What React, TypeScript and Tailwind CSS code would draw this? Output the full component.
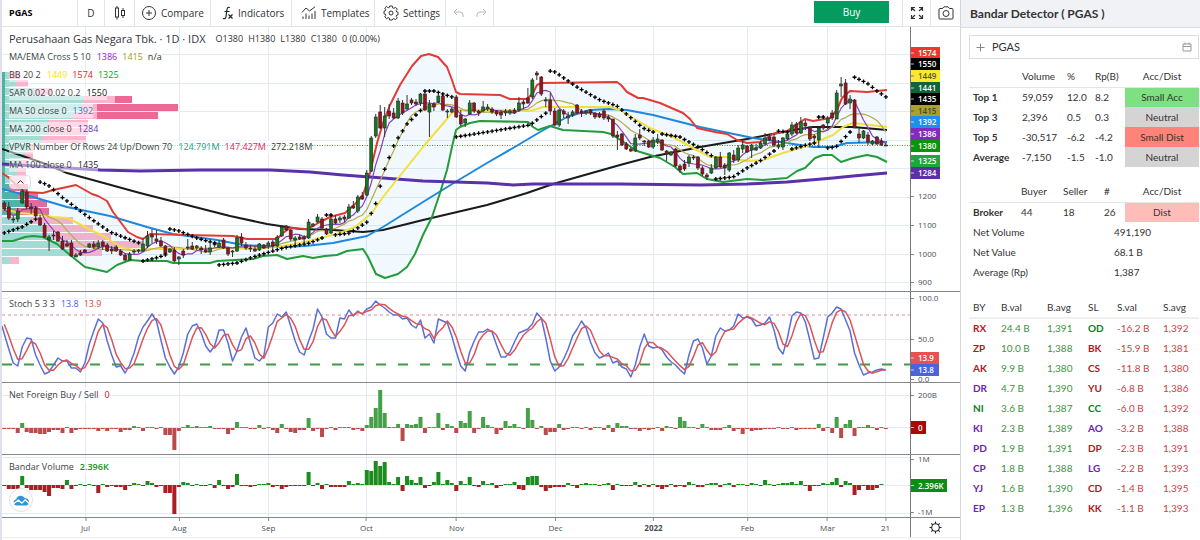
import { type FC, type ReactNode } from "react";

/* ============================================================
   DATA
============================================================ */

type Point = [number, number];

// one slot per trading day
const FIRST_X = 4.3;
const STEP = 4.475;
const barX = (i: number) => FIRST_X + i * STEP;

// g/r, high, body top, body bottom, low
const CANDLES = `
r 201 203 209 211|r 202 207 218 220|g 216 219 220 223|g 208 211 219 222|g 188 191 203 204|r 190 192 207 209
r 203 207 209 214|r 206 208 216 217|r 215 218 225 226|r 223 225 237 238|g 235 237 240 251|r 231 235 236 240
r 231 232 241 242|r 236 241 249 250|r 240 244 246 247|r 240 243 256 257|g 253 255 257 257|r 250 253 255 256
r 249 250 252 253|g 243 244 247 248|r 241 244 247 249|g 240 243 247 249|r 240 242 246 250|r 243 245 251 252
r 246 249 251 254|r 245 247 251 252|r 249 251 255 256|r 253 255 260 261|g 252 254 260 261|r 249 251 252 254
g 249 250 251 253|g 238 244 251 252|g 231 236 246 248|r 229 235 237 243|r 230 239 241 244|r 237 241 246 247
r 245 246 254 255|g 248 249 252 253|r 247 250 261 262|g 256 257 259 265|r 249 251 255 258|g 239 247 248 250
r 242 246 249 250|g 245 246 248 250|r 246 248 250 254|r 245 250 252 253|g 244 248 252 255|g 241 243 245 247
g 240 243 247 248|r 238 240 248 249|r 247 248 254 256|g 250 251 252 257|g 235 238 251 252|r 233 237 243 246
r 242 245 248 250|r 245 248 249 252|r 246 249 251 252|g 243 244 250 251|r 244 245 248 249|g 241 243 246 249
r 240 242 246 249|g 235 237 246 247|g 225 227 236 237|r 225 226 230 231|r 229 230 239 241|g 236 238 240 244
r 235 237 239 240|r 235 237 239 242|g 219 222 238 239|g 223 224 226 227|g 214 217 222 223|r 217 219 228 229
r 228 229 234 235|g 217 219 233 234|r 215 219 223 224|g 216 218 220 223|r 215 217 219 222|g 204 207 218 219
r 201 206 208 209|g 195 197 211 213|r 192 196 199 200|g 170 173 195 196|g 136 138 171 172|g 114 117 136 138
r 105 112 128 129|g 107 116 128 137|r 104 111 116 119|r 108 113 118 119|g 98 101 118 119|r 100 103 113 115
g 95 104 109 110|r 98 100 103 105|r 99 102 104 106|g 93 94 103 106|r 92 94 110 111|g 100 104 112 137
r 102 104 107 111|g 93 96 102 103|r 94 96 110 111|r 109 111 112 118|g 107 109 112 113|r 95 97 117 118
r 110 115 124 126|g 118 119 123 127|g 100 103 114 115|r 102 103 111 113|r 110 111 113 116|g 101 107 111 112
g 104 107 109 111|r 107 109 112 114|r 110 111 114 116|r 110 112 115 119|g 109 111 113 116|g 109 111 113 115
r 108 110 113 114|g 97 103 110 112|r 100 102 104 109|r 88 98 103 104|g 78 80 97 99|r 71 73 75 80
r 76 77 94 96|g 97 100 101 107|r 93 100 111 115|r 108 111 125 126|g 109 110 125 127|r 109 111 114 118
g 112 116 118 124|g 110 112 115 117|r 104 105 113 114|r 109 111 113 117|g 110 111 113 115|r 109 110 113 115
r 112 113 117 119|r 112 114 117 118|r 109 111 118 120|r 115 117 119 122|r 119 119 136 138|r 131 135 137 150
r 133 134 145 146|r 142 144 149 150|r 147 149 151 152|g 134 138 151 152|r 129 135 138 140|g 140 141 142 146
r 140 141 147 148|g 137 140 147 149|g 134 139 142 144|r 139 140 150 151|r 150 151 154 161|g 151 152 155 156
r 148 149 166 167|r 164 166 170 173|r 160 164 169 171|g 155 157 163 167|r 155 157 158 160|r 156 157 168 170
r 166 168 174 176|r 173 175 177 180|g 164 168 173 174|g 156 157 168 169|r 152 157 167 168|r 163 165 168 175
g 152 153 170 172|r 150 155 160 163|g 145 148 160 162|g 141 145 149 153|r 145 146 152 153|g 144 145 150 158
g 144 148 150 151|g 141 143 148 149|g 133 138 144 145|r 135 137 140 141|r 134 137 145 147|g 140 145 147 149
g 137 138 147 150|g 133 134 139 140|g 122 125 134 136|r 122 124 133 134|g 117 122 133 134|r 120 123 126 130
r 126 127 139 141|r 134 136 138 141|g 127 128 140 148|r 124 125 128 130|g 116 118 123 129|r 110 113 118 120
g 90 93 119 119|g 77 84 86 97|r 79 83 104 105|g 95 99 103 109|r 99 100 128 128|r 128 134 138 143
g 130 131 138 139|r 132 135 142 145|g 140 141 144 145|r 136 137 144 145|r 138 141 145 146|r 143 145 146 146`
  .trim()
  .split(/[|\n]/)
  .map((row) => {
    const [side, ...n] = row.split(" ");
    const [high, top, bottom, low] = n.map(Number);
    return { up: side === "g", high, top, bottom, low };
  });

const BB_UPPER: Point[] = [
  [2, 173], [8, 177], [13, 182], [25, 192], [43, 193], [53, 190], [67, 187], [76, 185], [92, 194], [98, 196],
  [107, 201], [113, 212], [128, 232], [137, 237], [143, 239], [150, 234], [187, 235], [233, 236], [247, 239],
  [277, 239], [283, 233], [290, 228], [307, 229], [313, 226], [320, 222], [330, 217], [345, 213], [355, 204],
  [363, 195], [370, 173], [377, 143], [383, 123], [390, 105], [400, 85], [412, 66], [421, 56], [429, 54],
  [438, 57], [447, 67], [452, 80], [456, 92], [460, 94], [500, 95], [510, 99], [527, 99], [533, 93], [537, 85],
  [542, 83], [617, 82], [621, 85], [627, 92], [638, 98], [643, 98], [660, 103], [683, 113], [690, 119],
  [697, 128], [715, 132], [727, 134], [737, 140], [747, 143], [760, 142], [773, 134], [787, 131], [805, 119],
  [813, 121], [830, 118], [837, 110], [842, 98], [850, 91], [867, 92], [887, 90],
];

const BB_LOWER: Point[] = [
  [2, 241], [13, 241], [25, 237], [33, 236], [43, 237], [57, 244], [70, 255], [85, 267], [107, 272], [117, 265],
  [130, 260], [143, 261], [167, 261], [173, 263], [210, 263], [217, 261], [253, 259], [263, 256], [277, 255],
  [287, 259], [303, 256], [313, 258], [325, 256], [337, 255], [347, 251], [363, 249], [368, 257], [376, 274],
  [385, 278], [398, 274], [407, 267], [415, 254], [423, 235], [432, 217], [440, 193], [447, 170], [452, 147],
  [456, 130], [460, 127], [470, 123], [480, 121], [528, 122], [533, 127], [538, 130], [550, 126], [563, 130],
  [583, 131], [603, 132], [611, 134], [622, 141], [637, 151], [660, 158], [675, 167], [683, 174], [697, 173],
  [707, 179], [723, 182], [747, 179], [763, 180], [787, 178], [797, 171], [805, 168], [815, 158], [823, 155],
  [832, 155], [841, 162], [853, 158], [867, 155], [877, 157], [887, 162],
];

const BB_BASIS: Point[] = [
  [2, 209], [20, 213], [33, 214], [53, 217], [68, 218], [87, 228], [107, 238], [120, 247], [133, 250],
  [153, 249], [183, 249], [227, 248], [253, 249], [283, 246], [305, 242], [340, 233], [355, 227], [372, 213],
  [383, 197], [423, 147], [452, 113], [458, 110], [487, 110], [530, 111], [543, 107], [610, 107], [620, 110],
  [633, 118], [650, 128], [673, 137], [693, 148], [710, 157], [727, 157], [747, 161], [763, 160], [783, 153],
  [807, 146], [833, 135], [843, 127], [853, 123], [887, 127],
];

const MA50: Point[] = [
  [2, 189], [33, 197], [67, 207], [110, 216], [147, 227], [173, 234], [217, 240], [243, 245], [283, 247],
  [305, 246], [333, 243], [367, 236], [383, 227], [423, 202], [457, 181], [487, 163], [513, 148], [540, 132],
  [567, 117], [590, 110], [610, 109], [627, 110], [653, 115], [700, 127], [753, 138], [787, 143], [813, 147],
  [833, 147], [847, 143], [887, 142],
];

const MA100: Point[] = [
  [2, 149], [43, 163], [67, 173], [100, 182], [140, 193], [187, 205], [230, 216], [267, 224], [300, 229],
  [333, 230], [363, 232], [383, 230], [423, 220], [487, 205], [527, 193], [553, 184], [620, 165], [650, 157],
  [700, 147], [747, 139], [793, 130], [813, 127], [853, 127], [887, 130],
];

const MA200: Point[] = [
  [2, 164], [50, 167], [100, 170], [140, 171], [200, 170], [270, 170], [310, 172], [343, 175], [423, 181],
  [487, 183], [513, 185], [533, 184], [620, 184], [700, 185], [747, 184], [787, 182], [833, 178], [853, 176],
  [887, 173],
];

const SAR: Point[][] = [
  [[4, 233], [22, 227], [36, 219]],
  [[40, 182], [48, 185], [63, 198], [87, 216], [110, 232], [139, 243]],
  [[143, 261], [156, 258], [168, 254]],
  [[170, 229], [179, 231], [197, 238], [214, 243]],
  [[218, 265], [237, 263], [253, 257], [283, 248], [310, 243], [322, 238]],
  [[326, 215], [331, 215]],
  [[335, 235], [350, 233], [367, 222], [371, 214], [376, 203], [380, 187], [384, 171], [389, 158], [393, 147], [398, 138], [407, 124], [421, 110]],
  [[425, 91], [434, 91], [452, 97]],
  [[456, 137], [530, 125], [546, 113]],
  [[550, 71], [555, 72], [577, 87], [600, 100], [617, 106], [630, 117], [643, 128], [653, 132]],
  [[662, 134], [680, 137], [700, 148], [712, 156]],
  [[716, 179], [733, 177], [747, 168], [760, 161], [774, 151]],
  [[778, 131], [787, 132]],
  [[792, 149], [814, 143]],
  [[818, 117], [824, 117]],
  [[827, 148], [836, 147], [850, 132]],
  [[854, 77], [867, 83], [877, 91], [886, 97]],
];

const STOCH_K = [
  334, 349, 363, 366, 347, 338, 339, 355, 365, 374, 372, 365, 358, 361, 361, 368, 368, 372, 363, 344, 331, 319,
  323, 341, 355, 367, 366, 373, 365, 353, 337, 327, 321, 314, 321, 340, 358, 367, 374, 367, 353, 334, 326, 324,
  333, 346, 352, 346, 330, 330, 343, 361, 351, 337, 328, 343, 358, 361, 356, 327, 323, 314, 317, 312, 326, 341,
  352, 355, 341, 329, 309, 317, 334, 338, 338, 318, 319, 310, 316, 311, 314, 309, 307, 301, 305, 308, 312, 315,
  315, 319, 318, 325, 328, 320, 338, 334, 343, 319, 321, 323, 336, 352, 366, 371, 352, 341, 332, 332, 329, 332,
  345, 357, 357, 352, 342, 333, 331, 329, 324, 313, 318, 338, 361, 371, 367, 359, 349, 336, 329, 321, 328, 342,
  353, 358, 356, 353, 363, 361, 367, 369, 377, 365, 347, 334, 346, 348, 347, 350, 357, 362, 365, 370, 374, 355,
  341, 339, 348, 364, 356, 336, 328, 331, 330, 326, 314, 318, 317, 319, 326, 325, 323, 317, 330, 348, 354, 338,
  316, 312, 313, 322, 340, 359, 358, 338, 317, 313, 307, 309, 320, 331, 353, 365, 375, 373, 372, 370, 369, 370,
];

const FOREIGN = [
  -1, -1, -1, -5, 5, -4, -5, -5, -6, -6, -4, -2, -2, -5, 1, -5, -2, -1, -1, -1, -1, -3, -1, -3, -1, -1, -4, -2,
  -2, 2, 1, -3, 1, 1, -1, 1, -7, -7, -22, -3, 1, 3, 1, 2, 1, 1, 2, -1, -1, -1, -6, -2, 6, 1, 1, -1, -1, 3, -1,
  1, -2, -5, 4, -1, -4, -5, -2, -2, 10, -3, -1, -9, -1, 1, -2, 1, 1, 1, -2, -1, -3, 3, 11, 20, 38, 15, 1, 1, 4,
  -13, 4, 3, 4, 11, -5, 1, 1, 15, -2, 4, 2, -5, 7, 5, 17, -5, -1, 11, 3, 1, -6, -2, 7, 2, 4, 1, -1, 20, 8, -1,
  2, -7, -4, -4, 4, -2, -1, 1, 1, -1, 1, -2, 1, 1, -2, 3, -4, 5, 2, 2, -1, -1, -3, -1, -2, -1, 1, -3, 2, 1, -1,
  11, 7, 1, 1, -1, 4, 1, -2, -2, -2, 1, 3, -3, -1, -6, -1, -3, -2, -2, -1, -1, -1, 1, -1, -1, 1, -2, -1, -1, -1,
  -1, 4, -3, 1, -5, 11, -10, 4, 8, -8, 1, 1, 3, 1, -2, 1, -1,
];

const BANDAR = [
  -1, -4, -4, -4, 9, -3, -5, -5, -5, -7, -11, -3, -3, -4, 5, -4, -1, 1, -1, 1, -1, -8, 1, -2, -1, -2, -2, -5, -1,
  2, 1, -1, 4, 2, -2, -1, -8, -8, -29, -2, 3, 2, -1, 1, -1, -1, 1, -3, 5, -1, -4, -2, 11, -1, -1, -2, -1, 1, 1,
  2, -2, -1, -4, -2, -1, -1, -1, -1, 13, -1, 2, -4, 1, -2, -2, -2, -2, 4, 1, 2, 1, 15, 14, 24, 19, 23, 3, 1, 8,
  -6, 9, 5, 2, 8, -3, -1, 3, 13, 1, 5, 2, -6, 4, 1, 8, -1, -2, 4, 1, 2, -3, -1, 1, 1, 3, -4, -5, 8, 9, 9, -2,
  -6, -3, -2, -2, -2, 2, -1, -3, 1, 2, 1, 1, -1, 1, 2, -5, 1, -1, -1, -1, 3, -2, 1, -2, 1, -2, -4, -2, 1, -2,
  -1, -2, 3, 1, -2, -2, 1, 2, 2, -2, 1, 2, -2, 1, 1, -1, 2, 1, -1, 5, 1, -1, 1, 2, 2, 3, 1, 4, -1, -6, -1, -1,
  2, 1, 3, 7, -2, 4, 2, -10, -5, -1, -5, -5, -3, 1,
];

// volume profile rows: y, end of up volume, end of down volume, inside value area
const PROFILE: [number, number, number, boolean][] = [
  [72, 9, 20, false], [80, 16, 28, false], [88, 35, 52, false], [96, 84, 115, false], [104, 82, 97, false],
  [112, 73, 97, false], [120, 48, 88, false], [128, 48, 88, false], [136, 42, 86, false], [144, 30, 33, false],
  [152, 24, 33, false], [160, 20, 27, false], [168, 17, 26, false], [176, 9, 26, false], [184, 9, 28, true],
  [192, 18, 38, true], [200, 25, 47, true], [208, 15, 49, true], [217, 30, 73, false], [225, 42, 93, false],
  [233, 52, 111, false], [241, 60, 143, false], [249, 72, 102, false], [257, 10, 19, false],
];

const GRID_X = [85, 179, 268, 366, 456, 555, 653, 747, 827, 885];
const GRID_Y = [54, 83, 111, 140, 168, 197, 225, 254, 282];

const MONTHS = [
  { x: 85, label: "Jul" },
  { x: 179, label: "Aug" },
  { x: 268, label: "Sep" },
  { x: 366, label: "Oct" },
  { x: 456, label: "Nov" },
  { x: 555, label: "Dec" },
  { x: 653, label: "2022", bold: true },
  { x: 747, label: "Feb" },
  { x: 827, label: "Mar" },
  { x: 885, label: "21" },
];

const PRICE_TAGS = [
  { y: 47, label: "1574", fill: "#f0362c" },
  { y: 58, label: "1550", fill: "#000000" },
  { y: 70, label: "1449", fill: "#fce92b", text: "#555533" },
  { y: 82, label: "1441", fill: "#14613a" },
  { y: 93, label: "1435", fill: "#000000" },
  { y: 105, label: "1415", fill: "#aaa12c", text: "#454530" },
  { y: 116, label: "1392", fill: "#1c8ff0" },
  { y: 128, label: "1386", fill: "#8528bd" },
  { y: 140, label: "1380", fill: "#0b940b" },
  { y: 155, label: "1325", fill: "#1fa63a" },
  { y: 167, label: "1284", fill: "#5c2fa5" },
];

interface LegendItem {
  name: string;
  values: { text: string; tone: string }[];
}

const LEGEND: LegendItem[] = [
  {
    name: "MA/EMA Cross 5 10",
    values: [
      { text: "1386", tone: "text-[#8e24c8]" },
      { text: "1415", tone: "text-[#a59a1c]" },
      { text: "n/a", tone: "text-[#333333]" },
    ],
  },
  {
    name: "BB 20 2",
    values: [
      { text: "1449", tone: "text-[#f5e50a]" },
      { text: "1574", tone: "text-[#e0261c]" },
      { text: "1325", tone: "text-[#129a2c]" },
    ],
  },
  { name: "SAR 0.02 0.02 0.2", values: [{ text: "1550", tone: "text-[#111111]" }] },
  { name: "MA 50 close 0", values: [{ text: "1392", tone: "text-[#1c7fe0]" }] },
  { name: "MA 200 close 0", values: [{ text: "1284", tone: "text-[#5e35b1]" }] },
  {
    name: "VPVR Number Of Rows 24 Up/Down 70",
    values: [
      { text: "124.791M", tone: "text-[#1f9e8c]" },
      { text: "147.427M", tone: "text-[#e02868]" },
      { text: "272.218M", tone: "text-[#333333]" },
    ],
  },
  { name: "MA 100 close 0", values: [{ text: "1435", tone: "text-[#222222]" }] },
];

const TOP_ROWS = [
  { name: "Top 1", volume: "59,059", pct: "12.0", rp: "8.2", status: "Small Acc", tone: "bg-[#7ee081]" },
  { name: "Top 3", volume: "2,396", pct: "0.5", rp: "0.3", status: "Neutral", tone: "bg-[#d4d4d4]" },
  { name: "Top 5", volume: "-30,517", pct: "-6.2", rp: "-4.2", status: "Small Dist", tone: "bg-[#ff8378]" },
  { name: "Average", volume: "-7,150", pct: "-1.5", rp: "-1.0", status: "Neutral", tone: "bg-[#d4d4d4]" },
];

const NET_ROWS = [
  { name: "Net Volume", value: "491,190" },
  { name: "Net Value", value: "68.1 B" },
  { name: "Average (Rp)", value: "1,387" },
];

const RED = "text-[#b3161b]";
const GREEN = "text-[#0b7d1c]";
const PURPLE = "text-[#6a22b0]";

const BROKERS = [
  { by: "RX", byTone: RED, bval: "24.4 B", bavg: "1,391", sl: "OD", slTone: GREEN, sval: "-16.2 B", savg: "1,392" },
  { by: "ZP", byTone: RED, bval: "10.0 B", bavg: "1,388", sl: "BK", slTone: RED, sval: "-15.9 B", savg: "1,381" },
  { by: "AK", byTone: RED, bval: "9.9 B", bavg: "1,380", sl: "CS", slTone: RED, sval: "-11.8 B", savg: "1,380" },
  { by: "DR", byTone: PURPLE, bval: "4.7 B", bavg: "1,390", sl: "YU", slTone: RED, sval: "-6.8 B", savg: "1,386" },
  { by: "NI", byTone: GREEN, bval: "3.6 B", bavg: "1,387", sl: "CC", slTone: GREEN, sval: "-6.0 B", savg: "1,392" },
  { by: "KI", byTone: PURPLE, bval: "2.3 B", bavg: "1,389", sl: "AO", slTone: PURPLE, sval: "-3.2 B", savg: "1,388" },
  { by: "PD", byTone: PURPLE, bval: "1.9 B", bavg: "1,391", sl: "DP", slTone: RED, sval: "-2.3 B", savg: "1,391" },
  { by: "CP", byTone: PURPLE, bval: "1.8 B", bavg: "1,388", sl: "LG", slTone: PURPLE, sval: "-2.2 B", savg: "1,393" },
  { by: "YJ", byTone: PURPLE, bval: "1.6 B", bavg: "1,390", sl: "CD", slTone: RED, sval: "-1.4 B", savg: "1,395" },
  { by: "EP", byTone: PURPLE, bval: "1.3 B", bavg: "1,396", sl: "KK", slTone: RED, sval: "-1.1 B", savg: "1,393" },
];

/* ============================================================
   HELPERS
============================================================ */

const toPoints = (pts: Point[]) => pts.map((p) => p.join(",")).join(" ");

// `before` holds the values of the days left of the first bar
const average = (values: number[], span: number, before: number[] = []): Point[] => {
  const all = [...before, ...values];
  return values.map((_, i) => {
    const end = i + before.length + 1;
    const part = all.slice(Math.max(0, end - span), end);
    return [barX(i), part.reduce((a, b) => a + b, 0) / part.length];
  });
};

// height of a polyline at a given x
const heightAt = (line: Point[], x: number) => {
  const k = line.findIndex((p) => p[0] >= x);
  if (k <= 0) return line[k === 0 ? 0 : line.length - 1][1];
  const [x0, y0] = line[k - 1];
  const [x1, y1] = line[k];
  return y0 + ((y1 - y0) * (x - x0)) / (x1 - x0);
};

const closes = CANDLES.map((c) => (c.up ? c.top : c.bottom));

const sarDots = SAR.flatMap((line) =>
  CANDLES.map((_, i) => barX(i))
    .filter((x) => x >= line[0][0] - 1.5 && x <= line[line.length - 1][0] + 1.5)
    .map((x): Point => [x, heightAt(line, x)])
);

/* ============================================================
   ICONS
============================================================ */

const CandlesIcon = () => (
  <svg width="12" height="16" viewBox="0 0 12 16" fill="none" stroke="#333" strokeWidth="1">
    <path d="M3 1v2M3 12v2.5M9 3v2.500M9 10.500V13" />
    <rect x="1.500" y="3" width="3" height="9" />
    <rect x="7.500" y="5.500" width="3" height="5" />
  </svg>
);

const CompareIcon = () => (
  <svg width="16" height="16" viewBox="0 0 16 16" fill="none" stroke="#333" strokeWidth="1">
    <circle cx="8" cy="8" r="6.500" />
    <path d="M8 5v6M5 8h6" />
  </svg>
);

const FxIcon = () => (
  <svg width="12" height="14" viewBox="0 0 12 14" fill="none" stroke="#222" strokeWidth="1.200">
    <path d="M8 1.500C6.200 .8 5.300 1.600 5 3.500L4 10.500C3.700 12.400 2.800 13 1 12.500M2.500 5.500H7.500" />
    <path d="M6.500 8.500l4 4M10.500 8.500l-4 4" />
  </svg>
);

const TemplatesIcon = () => (
  <svg width="16" height="14" viewBox="0 0 16 14" fill="none" stroke="#333" strokeWidth="1">
    <path d="M1 6.500L5 2l3.500 3L14 .8" />
    <path d="M2 13v-2.500M5 13V7.500M8 13V9.500M11 13V7.500M14 13V5" />
  </svg>
);

const GearIcon = () => (
  <svg width="16" height="16" viewBox="0 0 16 16" fill="none" stroke="#333" strokeWidth="1" strokeLinejoin="round">
    <path d="M6.700 1h2.600l.4 1.900 1.200.5 1.600-1.100 1.800 1.800-1.100 1.600.5 1.200 1.300.3v2.600l-1.300.3-.5 1.200 1.100 1.600-1.800 1.800-1.600-1.100-1.200.5L9.300 15H6.700l-.4-1.900-1.200-.5-1.600 1.100-1.800-1.800 1.100-1.600-.5-1.200L1 8.800V6.200l1.300-.3.500-1.200L1.700 3.100l1.800-1.800 1.600 1.600 1.200-.5z" />
    <circle cx="8" cy="8" r="2" />
  </svg>
);

const UndoIcon: FC<{ flip?: boolean }> = ({ flip }) => (
  <svg width="11" height="10" viewBox="0 0 11 10" fill="none" stroke="#b8bac0" strokeWidth="1">
    <path d={flip ? "M1 9V7Q1 4 4 4h6M7 1l3 3-3 3" : "M10 9V7Q10 4 7 4H1M4 1L1 4l3 3"} />
  </svg>
);

const FullscreenIcon = () => (
  <svg width="14" height="14" viewBox="0 0 14 14" fill="none" stroke="#333" strokeWidth="1.200">
    <path d="M1.500 5V1.500H5M1.500 1.500l3.500 3.500M9 1.500h3.500V5M12.500 1.500L9 5M1.500 9v3.500H5M1.500 12.500L5 9M12.500 9v3.500H9M12.500 12.500L9 9" />
  </svg>
);

const CameraIcon = () => (
  <svg width="16" height="14" viewBox="0 0 16 14" fill="none" stroke="#333" strokeWidth="1">
    <path d="M1 3.500q0-1 1-1h2.500L6 .8h4l1.500 1.700H14q1 0 1 1V12q0 1-1 1H2q-1 0-1-1z" />
    <circle cx="8" cy="7.500" r="3" />
  </svg>
);

const SunIcon = () => (
  <svg width="13" height="13" viewBox="0 0 13 13" fill="none" stroke="#222" strokeWidth="1.100">
    <circle cx="6.500" cy="6.500" r="3.800" />
    <path d="M6.500 .5v2.200M6.500 10.300v2.200M.5 6.500h2.200M10.300 6.500h2.200M2.300 2.300l1.500 1.500M9.200 9.200l1.500 1.500M2.300 10.700l1.500-1.500M9.200 3.800l1.500-1.500" />
  </svg>
);

const CloudLogo = () => (
  <svg width="17" height="11" viewBox="0 0 17 11">
    <path d="M3.500 10.500a3.200 3.200 0 0 1-.3-6.300A4.800 4.800 0 0 1 12 3.300a3.700 3.700 0 0 1 1.500 7.200z" fill="#2f96d8" />
    <path d="M.5 8.800l4.800-3.600 3.600 3 3.300-3.400 4 3.600" fill="none" stroke="#fff" strokeWidth="1.300" />
  </svg>
);

/* ============================================================
   TOOLBAR
============================================================ */

interface ToolButtonProps {
  className: string;
  label?: string;
  children: ReactNode;
}

const ToolButton: FC<ToolButtonProps> = ({ className, label, children }) => (
  <button
    type="button"
    aria-label={label}
    className={`flex h-full shrink-0 items-center border-[#e0e3eb] ${className}`}
  >
    {children}
  </button>
);

const Toolbar = () => (
  <header className="flex h-[27px] items-center border-b border-[#e0e3eb] text-[10px] text-[#333]">
    <ToolButton className="w-[76px] border-r pl-[7px] text-[9px] font-bold text-black">PGAS</ToolButton>
    <ToolButton className="w-[27px] justify-center border-r">D</ToolButton>
    <ToolButton className="w-[30px] justify-center border-r" label="Candles">
      <CandlesIcon />
    </ToolButton>
    <ToolButton className="w-[76px] gap-1 border-r pl-[6px]">
      <CompareIcon />
      Compare
    </ToolButton>
    <ToolButton className="w-[81px] gap-1 border-r pl-[11px]">
      <FxIcon />
      Indicators
    </ToolButton>
    <ToolButton className="w-[83px] gap-1 border-r pl-[9px]">
      <TemplatesIcon />
      Templates
    </ToolButton>
    <ToolButton className="w-[71px] gap-1 border-r pl-[8px]">
      <GearIcon />
      Settings
    </ToolButton>
    <ToolButton className="w-6 justify-center" label="Undo">
      <UndoIcon />
    </ToolButton>
    <ToolButton className="w-6 justify-center border-r" label="Redo">
      <UndoIcon flip />
    </ToolButton>
    <button type="button" className="mr-[13px] mb-[2px] ml-auto h-[22px] w-[75px] bg-[#049b61] text-white">
      Buy
    </button>
    <ToolButton className="w-[29px] justify-center border-x" label="Fullscreen">
      <FullscreenIcon />
    </ToolButton>
    <ToolButton className="w-[29px] justify-center" label="Snapshot">
      <CameraIcon />
    </ToolButton>
  </header>
);

/* ============================================================
   CHART PANES
============================================================ */

interface PaneProps {
  height: string;
  top: number;
  span: number;
  rows: number[];
  legend: ReactNode;
  axis: ReactNode;
  children: ReactNode;
}

const Pane: FC<PaneProps> = ({ height, top, span, rows, legend, axis, children }) => (
  <section className={`relative flex border-b border-[#85878c] ${height}`}>
    <svg className="h-full min-w-0 flex-1" viewBox={`2 ${top} 908 ${span}`} preserveAspectRatio="none">
      <g stroke="#e1ecf2">
        {GRID_X.map((x) => (
          <line key={x} x1={x + 0.5} x2={x + 0.5} y1={top} y2={top + span} />
        ))}
        {rows.map((y) => (
          <line key={y} x1="2" x2="910" y1={y + 0.5} y2={y + 0.5} />
        ))}
      </g>
      {children}
    </svg>
    <svg
      className="h-full w-[50px] shrink-0 border-l border-[#75777c] text-[8px]"
      viewBox={`911 ${top} 49 ${span}`}
      preserveAspectRatio="xMinYMin slice"
    >
      {axis}
    </svg>
    <div className="absolute top-[3px] left-[7px]">{legend}</div>
  </section>
);

const AxisLabel: FC<{ y: number; children: ReactNode }> = ({ y, children }) => (
  <g>
    <path d={`M911 ${y + 0.5}h3`} stroke="#888" />
    <text x="918" y={y + 3} fill="#4a4d56">
      {children}
    </text>
  </g>
);

interface AxisTagProps {
  y: number;
  width: number;
  height?: number;
  fill: string;
  text?: string;
  children: ReactNode;
}

const AxisTag: FC<AxisTagProps> = ({ y, width, height = 12, fill, text = "#fff", children }) => (
  <g>
    <rect x="911" y={y} width={width} height={height} fill={fill} />
    <path d={`M911 ${y + height / 2}h3`} stroke={text} strokeOpacity=".7" />
    <text x="918" y={y + height / 2 + 3} fill={text} fontWeight="600">
      {children}
    </text>
  </g>
);

const LegendRow: FC<LegendItem> = ({ name, values }) => (
  <div className="flex h-[18px] items-center">
    <div className="flex gap-[5px] bg-white/50 text-[9px] leading-[14px] whitespace-nowrap">
      <span className="pr-px text-[#3c3f47]">{name}</span>
      {values.map((v) => (
        <span key={v.text} className={v.tone}>
          {v.text}
        </span>
      ))}
    </div>
  </div>
);

const PriceLegend = () => (
  <>
    <div className="flex h-[18px] items-center gap-[10px] whitespace-nowrap">
      <h1 className="text-[11px] text-[#33363d]">Perusahaan Gas Negara Tbk. · 1D · IDX</h1>
      <p className="flex gap-[5px] text-[9px] text-[#333]">
        <span>O1380</span>
        <span>H1380</span>
        <span>L1380</span>
        <span>C1380</span>
        <span>0 (0.00%)</span>
      </p>
    </div>
    {LEGEND.map((item) => (
      <LegendRow key={item.name} {...item} />
    ))}
    <button
      type="button"
      aria-label="Collapse legend"
      className="mt-px flex h-[14px] w-[22px] items-center justify-center rounded-sm border border-[#dddddd] bg-white/70"
    >
      <svg width="7" height="4" viewBox="0 0 7 4" fill="none" stroke="#333">
        <path d="M.5 3.500l3-3 3 3" />
      </svg>
    </button>
  </>
);

const PricePane = () => (
  <Pane
    height="h-[265px]"
    top={27}
    span={264}
    rows={GRID_Y}
    legend={<PriceLegend />}
    axis={
      <>
        {PRICE_TAGS.map((t) => (
          <AxisTag key={t.label} y={t.y} width={29} fill={t.fill} text={t.text}>
            {t.label}
          </AxisTag>
        ))}
        <AxisLabel y={196}>1200</AxisLabel>
        <AxisLabel y={225}>1100</AxisLabel>
        <AxisLabel y={254}>1000</AxisLabel>
        <AxisLabel y={282}>900</AxisLabel>
      </>
    }
  >
    {/* volume profile */}
    {PROFILE.map(([y, up, down, inside]) => (
      <g key={y}>
        <rect x="2" y={y} width={up - 2} height="7" fill={inside ? "#52b5a6" : "#a3dcd5"} />
        <rect x={up} y={y} width={down - up} height="7" fill={inside ? "#f06a9b" : "#fab4cd"} />
      </g>
    ))}
    <rect x="2" y="72" width="3" height="120" fill="#4fb3a3" />
    <rect x="115" y="96" width="17" height="7" fill="#f06695" />
    <rect x="97" y="104" width="81" height="7" fill="#f06695" />
    <rect x="97" y="112" width="61" height="7" fill="#f06695" />

    {/* Bollinger band */}
    <polygon points={toPoints([...BB_UPPER, ...[...BB_LOWER].reverse()])} fill="#2196f3" fillOpacity=".06" />
    <line x1="2" x2="910" y1="145.500" y2="145.500" stroke="#2e9e3a" strokeDasharray="1 1.500" />

    <g fill="none" strokeLinejoin="round">
      <polyline points={toPoints(MA100)} stroke="#1a1a1a" strokeWidth="2" />
      <polyline points={toPoints(MA50)} stroke="#1e88dc" strokeWidth="2" />
      <polyline points={toPoints(BB_UPPER)} stroke="#e03c36" strokeWidth="2" />
      <polyline points={toPoints(BB_LOWER)} stroke="#239c3c" strokeWidth="2" />
      <polyline points={toPoints(MA200)} stroke="#5a31ab" strokeWidth="3" />
      <polyline points={toPoints(BB_BASIS)} stroke="#f2e03c" strokeWidth="2" />
      <polyline points={toPoints(average(closes, 10))} stroke="#b3aa48" strokeWidth="1.200" />
      <polyline points={toPoints(average(closes, 5))} stroke="#8f3fc0" strokeWidth="1.200" />
    </g>

    {/* candles */}
    {CANDLES.map((c, i) => (
      <g key={i}>
        <line x1={barX(i)} x2={barX(i)} y1={c.high} y2={c.low} stroke="#333" />
        <rect
          x={barX(i) - 1.5}
          y={c.top}
          width="3"
          height={Math.max(1, c.bottom - c.top)}
          fill={c.up ? "#157a1e" : "#a01018"}
          stroke="#262626"
          strokeWidth=".6"
        />
      </g>
    ))}

    {/* parabolic SAR */}
    <path
      d={sarDots.map(([x, y]) => `M${x - 2} ${y}h4M${x} ${y - 2}v4`).join("")}
      stroke="#000"
      strokeWidth="1.300"
      fill="none"
    />
  </Pane>
);

const StochPane = () => (
  <Pane
    height="h-[91px]"
    top={292}
    span={90}
    rows={[298, 339]}
    legend={
      <LegendRow
        name="Stoch 5 3 3"
        values={[
          { text: "13.8", tone: "text-[#4a5fd8]" },
          { text: "13.9", tone: "text-[#e04848]" },
        ]}
      />
    }
    axis={
      <>
        <AxisLabel y={298}>100.0</AxisLabel>
        <AxisLabel y={339}>50.0</AxisLabel>
        <AxisLabel y={379}>0.0</AxisLabel>
        <AxisTag y={352} width={28} fill="#e5524f">
          13.9
        </AxisTag>
        <AxisTag y={364} width={28} fill="#4c63dc">
          13.8
        </AxisTag>
      </>
    }
  >
    <line x1="2" x2="910" y1="315" y2="315" stroke="#d98aa8" strokeDasharray="3 3" />
    <line x1="2" x2="910" y1="364.500" y2="364.500" stroke="#3f9c46" strokeWidth="2" strokeDasharray="10 12" />
    <g fill="none" strokeWidth="1.500" strokeLinejoin="round">
      <polyline points={toPoints(STOCH_K.map((y, i): Point => [barX(i), y]))} stroke="#5a6fd8" />
      <path d="M2 326L4.300 334" stroke="#5a6fd8" />
      <polyline points={toPoints(average(STOCH_K, 3, [315, 324]))} stroke="#dc5358" />
    </g>
  </Pane>
);

interface BarsProps {
  values: number[];
  zero: number;
  up: string;
  down: string;
}

const Bars: FC<BarsProps> = ({ values, zero, up, down }) => (
  <>
    {values.map((v, i) => (
      <rect
        key={i}
        x={barX(i) - 2}
        y={v > 0 ? zero - v : zero}
        width="4"
        height={Math.abs(v)}
        fill={v > 0 ? up : down}
      />
    ))}
  </>
);

const ForeignPane = () => (
  <Pane
    height="h-[72px]"
    top={383}
    span={71}
    rows={[395, 427]}
    legend={<LegendRow name="Net Foreign Buy / Sell" values={[{ text: "0", tone: "text-[#b01818]" }]} />}
    axis={
      <>
        <AxisLabel y={395}>200B</AxisLabel>
        <AxisTag y={421} width={15} height={13} fill="#ab0808">
          0
        </AxisTag>
      </>
    }
  >
    <Bars values={FOREIGN} zero={428} up="#46a048" down="#bd4a4a" />
  </Pane>
);

const BandarPane = () => (
  <Pane
    height="h-[63px]"
    top={455}
    span={62}
    rows={[457, 485, 513]}
    legend={
      <>
        <LegendRow name="Bandar Volume" values={[{ text: "2.396K", tone: "font-semibold text-[#0f930f]" }]} />
        <a
          href="#chart"
          aria-label="Chart provider"
          className="mt-3 flex size-6 items-center justify-center rounded-full border border-[#e2e2e2] bg-white"
        >
          <CloudLogo />
        </a>
      </>
    }
    axis={
      <>
        <AxisLabel y={459}>1M</AxisLabel>
        <AxisLabel y={512}>-1M</AxisLabel>
        <AxisTag y={479} width={36} height={13} fill="#0c8c14">
          2.396K
        </AxisTag>
      </>
    }
  >
    <Bars values={BANDAR} zero={485} up="#1c8c1f" down="#aa1e22" />
  </Pane>
);

const TimeAxis = () => (
  <footer className="flex h-5 border-b border-[#ececf0]">
    <ol className="relative flex-1 text-[8px] text-[#4a4d56]">
      {MONTHS.map((m) => (
        <li
          key={m.label}
          style={{ left: `${((m.x - 1.5) / 908) * 100}%` }}
          className={`absolute top-0 flex -translate-x-1/2 flex-col items-center ${m.bold ? "font-bold" : ""}`}
        >
          <span className="h-[3px] w-px bg-[#85878c]" />
          <span className="leading-[14px]">{m.label}</span>
        </li>
      ))}
    </ol>
    <button
      type="button"
      aria-label="Axis settings"
      className="flex w-[50px] items-center justify-center border-l border-[#75777c]"
    >
      <SunIcon />
    </button>
  </footer>
);

/* ============================================================
   BANDAR DETECTOR
============================================================ */

const DetectorPanel = () => (
  <aside className="w-60 shrink-0 border-l border-[#d5d7db] font-[Lato,sans-serif] text-[10px] text-[#333]">
    <h2 className="flex h-7 items-center border-b border-[#dcdde0] bg-[#f1f2f6] pl-[9px] text-[12px] font-bold">
      Bandar Detector ( PGAS )
    </h2>

    <div className="pt-[7px] pr-px pl-2">
      <label className="flex h-6 items-center border border-[#dcdcdc] px-[6px]">
        <svg width="9" height="9" viewBox="0 0 9 9" stroke="#888">
          <path d="M4.500 .5v8M.5 4.500h8" />
        </svg>
        <input
          aria-label="Symbol"
          defaultValue="PGAS"
          className="ml-[7px] min-w-0 flex-1 text-[11px] text-[#333] outline-none"
        />
        <svg width="10" height="10" viewBox="0 0 10 10" fill="none" stroke="#999">
          <path d="M1 2h8v7H1zM1 4.500h8M3 .5v2M7 .5v2" />
        </svg>
      </label>

      <table className="mt-[7px] w-full table-fixed">
        <thead>
          <tr className="h-[21px] border-b border-[#e4e4e4]">
            <th className="w-[49px]" aria-label="Rank" />
            <th className="w-[45px] pl-1 text-left font-normal">Volume</th>
            <th className="w-[28px] pl-1 text-left font-normal">%</th>
            <th className="w-[34px] pl-1 text-left font-normal">Rp(B)</th>
            <th className="font-normal">Acc/Dist</th>
          </tr>
        </thead>
        <tbody>
          {TOP_ROWS.map((r) => (
            <tr key={r.name} className="h-5">
              <th className="pl-1 text-left font-bold">{r.name}</th>
              <td className="pl-1">{r.volume}</td>
              <td className="pl-1">{r.pct}</td>
              <td className="pl-1">{r.rp}</td>
              <td className={`text-center ${r.tone}`}>{r.status}</td>
            </tr>
          ))}
        </tbody>
      </table>

      <table className="mt-[14px] w-full table-fixed">
        <thead>
          <tr className="h-[21px] border-b border-[#e4e4e4]">
            <th className="w-[48px]" aria-label="Type" />
            <th className="w-[42px] pl-1 text-left font-normal">Buyer</th>
            <th className="w-[41px] pl-1 text-left font-normal">Seller</th>
            <th className="w-[25px] pl-1 text-left font-normal">#</th>
            <th className="font-normal">Acc/Dist</th>
          </tr>
        </thead>
        <tbody>
          <tr className="h-5">
            <th className="pl-1 text-left font-bold">Broker</th>
            <td className="pl-1">44</td>
            <td className="pl-1">18</td>
            <td className="pl-1">26</td>
            <td className="bg-[#ffbdba] text-center">Dist</td>
          </tr>
        </tbody>
      </table>

      <dl>
        {NET_ROWS.map((r) => (
          <div key={r.name} className="flex h-5 items-center pl-1">
            <dt className="w-[141px]">{r.name}</dt>
            <dd>{r.value}</dd>
          </div>
        ))}
      </dl>

      <table className="mt-[15px] w-full table-fixed">
        <thead>
          <tr className="h-[21px] border-b-2 border-[#efefef] text-left">
            <th className="w-[28px] pl-1 font-normal">BY</th>
            <th className="w-[46px] pl-1 font-normal">B.val</th>
            <th className="w-[41px] pl-1 font-normal">B.avg</th>
            <th className="w-[29px] pl-1 font-normal">SL</th>
            <th className="w-[46px] pl-1 font-normal">S.val</th>
            <th className="pl-1 font-normal">S.avg</th>
          </tr>
        </thead>
        <tbody>
          {BROKERS.map((b) => (
            <tr key={b.by} className="h-5">
              <td className={`pl-1 font-bold ${b.byTone}`}>{b.by}</td>
              <td className="pl-1 text-[#3c9440]">{b.bval}</td>
              <td className="pl-1 text-[#3c9440]">{b.bavg}</td>
              <td className={`pl-1 font-bold ${b.slTone}`}>{b.sl}</td>
              <td className="pl-1 text-[#cf4048]">{b.sval}</td>
              <td className="pl-1 text-[#cf4048]">{b.savg}</td>
            </tr>
          ))}
        </tbody>
      </table>
    </div>
  </aside>
);

const App = () => {
  return (
    <div className="flex min-h-screen bg-white font-['Open_Sans','Noto_Sans',sans-serif]">
      <main id="chart" className="min-w-0 flex-1 border-l-2 border-[#dfe1ea]">
        <Toolbar />
        <PricePane />
        <StochPane />
        <ForeignPane />
        <BandarPane />
        <TimeAxis />
      </main>
      <DetectorPanel />
    </div>
  );
};

export default App;
